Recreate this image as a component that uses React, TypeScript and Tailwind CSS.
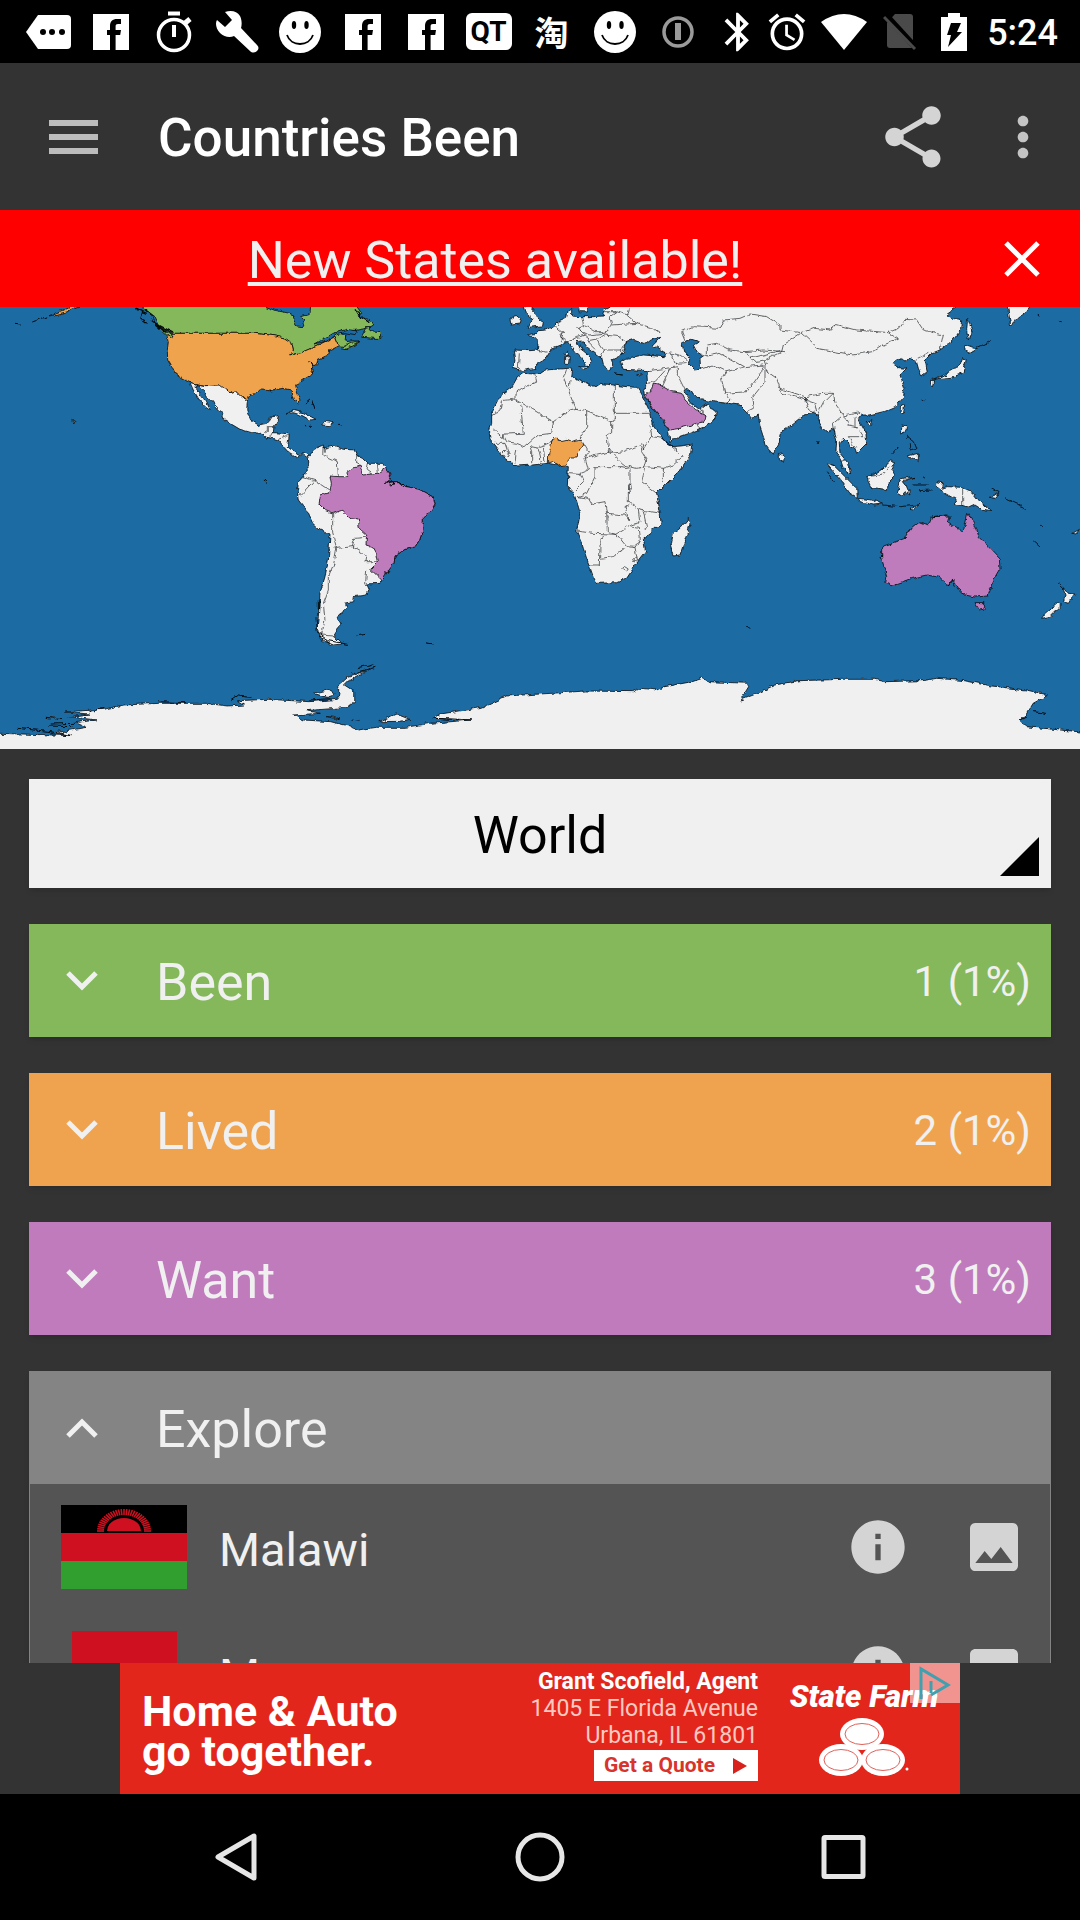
import React from "react";
import { MdInfo, MdImage, MdShare, MdBluetooth, MdAlarm, MdMoreVert } from "react-icons/md";

const Tag = () => (
  <svg className="h-10 w-12" viewBox="0 0 48 40">
    <path d="M14 3h29a4 4 0 0 1 4 4v26a4 4 0 0 1-4 4H14L2 20z" fill="#fff" />
    <circle cx="19" cy="20" r="3" /><circle cx="28" cy="20" r="3" /><circle cx="38" cy="20" r="3" />
  </svg>
);
const Facebook = () => (
  <svg className="h-9 w-9" viewBox="0 0 36 36">
    <path d="M0 0h36v36H0z" fill="#fff" />
    <path d="M17 36V21h-3v-5h3v-4c0-4.500 2.500-7 7-7h4v5h-3c-1.600 0-2.400.8-2.400 2.400V16H28l-.8 5h-4.600v15z" />
  </svg>
);
const Timer = () => (
  <svg className="h-11 w-10" viewBox="0 0 40 44" fill="none" stroke="#fff">
    <circle cx="20" cy="25" r="15.500" strokeWidth="3.500" />
    <path d="M14 3.500h12" strokeWidth="4" /><path d="M20 15v12" strokeWidth="4" /><path d="M30 14l6-5" strokeWidth="5" />
  </svg>
);
const Wrench = () => (
  <svg className="h-11 w-11" viewBox="0 0 44 44">
    <path d="M10 2C16 0 22 1 25 6c2 4 2 9 1 12l16 17c2 2 2 4 0 6s-5 2-7 0L19 26c-4 2-10 1-14-3C1 19 0 13 2 10l8 7 7-7z" fill="#fff" />
  </svg>
);
const Smile = () => (
  <svg className="h-[42px] w-[42px]" viewBox="0 0 42 42">
    <circle cx="21" cy="21" r="21" fill="#fff" />
    <ellipse cx="15" cy="14" rx="2.200" ry="4" /><ellipse cx="27.500" cy="14" rx="2.200" ry="4" />
    <path d="M8 24c4 12 22 12 26 0" fill="none" stroke="#000" strokeWidth="1.800" />
  </svg>
);
const Keyring = () => (
  <svg className="h-8 w-8" viewBox="0 0 32 32" fill="none" stroke="#9a9a9a">
    <circle cx="16" cy="16" r="14" strokeWidth="3.500" /><path d="M16 7v17" strokeWidth="6" />
  </svg>
);
const Wifi = () => (
  <svg className="h-9 w-[46px]" viewBox="0 0 46 36"><path d="M0 8Q23-8 46 8L23 36z" fill="#fff" /></svg>
);
const NoSim = () => (
  <svg className="h-9 w-[34px]" viewBox="0 0 34 36">
    <path d="M12 0h15q3 0 3 3v31q0 0-1 0H7q-3 0-3-3V9z" fill="#4a4a4a" />
    <path d="M2 0l32 35" stroke="#000" strokeWidth="6" /><path d="M1 3l31 32" stroke="#4a4a4a" strokeWidth="3" />
  </svg>
);
const Battery = () => (
  <svg className="h-[38px] w-[26px]" viewBox="0 0 26 38">
    <path d="M7 0h12v4h7v34H0V4h7z" fill="#fff" /><path d="M10 10h10l-4 9h5L7 34l3-12H6z" />
  </svg>
);

function StatusBar() {
  const notes = [
    <Tag />, <Facebook />, <Timer />, <Wrench />, <Smile />, <Facebook />, <Facebook />,
    <span className="flex h-[37px] w-[46px] items-center justify-center rounded-md bg-white text-[28px] font-bold leading-none text-black">QT</span>,
    <span className="font-['Noto_Sans_CJK_SC',sans-serif] text-[34px] font-bold leading-none text-white">淘</span>,
    <Smile />, <Keyring />,
  ];
  return (
    <div className="flex h-[63px] shrink-0 items-center bg-black pl-4 pr-[22px]">
      {notes.map((n, i) => (
        <div key={i} className="flex w-[63px] justify-center">{n}</div>
      ))}
      <div className="ml-auto flex items-center">
        <MdBluetooth className="mr-1 size-[46px] text-white" />
        <MdAlarm className="mr-3 size-[44px] text-white" />
        <Wifi />
        <div className="ml-4 mr-6"><NoSim /></div>
        <Battery />
        <span className="ml-5 pt-0.5 text-[36px] font-medium leading-none text-white">5:24</span>
      </div>
    </div>
  );
}

const LAND = "#f0f0f0";
const SEA = "#1c6ba3";

function WorldMap() {
  const a = "translate(0 300) scale(.33333)";
  const b = "translate(480 300) scale(.33333)";
  const c = "translate(740 300) scale(.33333)";
  return (
    <svg className="block w-full shrink-0" viewBox="0 307 1080 442" role="img" aria-label="World map">
      <defs>
        <filter id="coast" x="0" y="0" width="100%" height="100%" filterUnits="objectBoundingBox">
          <feTurbulence type="fractalNoise" baseFrequency=".16" numOctaves="2" seed="4" />
          <feDisplacementMap in="SourceGraphic" scale="5" xChannelSelector="R" yChannelSelector="G" />
        </filter>
      </defs>
      <rect x="0" y="300" width="1080" height="460" fill={SEA} />
      <g filter="url(#coast)" stroke="#050a0e" strokeWidth="2.400" strokeLinejoin="round">
        <rect x="0" y="290" width="1080" height="480" fill="none" stroke="none" />
        <g transform={a} fill={LAND}>
          <path fill="#84b85a" d="M400 5L445 35 465 50 480 80 518 100 765 100 830 108 852 114 876 130 880 150 872 165 905 157 940 142 975 125 1005 112 1015 137 1035 140 1025 147 1045 145 1080 125 1060 122 1038 125 1040 108 1020 100 1060 92 1100 85 1118 75 1112 62 1075 45 1085 40 1060 5z" />
          <path fill="#84b85a" d="M1085 112L1100 85 1112 82 1110 95 1140 98 1143 115 1125 115zM1028 140L1050 128 1080 122 1050 140 1030 148zM472 82L490 85 518 105 515 114 495 103z" />
          <path fill={SEA} d="M785 15L830 32 870 40 885 45 880 62 890 78 905 80 912 65 905 50 930 42 932 10zM945 132L1000 100 1040 88 1070 92 1065 104 1035 98 1010 104 985 122z" />
          <path fill="none" d="M405 20L425 35 420 55 440 70M430 25L455 45 465 72 500 95M410 28L440 40M450 60L500 100M470 72L520 98M1065 25L1080 50 1105 65" strokeWidth="4" />
          <path fill="#f0a34e" d="M500 103L516 114 520 100 765 100 830 108 852 114 876 130 880 150 872 165 905 157 940 142 975 125 1005 112 1015 137 990 150 985 165 955 178 950 195 935 205 938 222 900 245 887 258 890 275 900 300 895 312 880 298 872 270 850 265 830 268 810 272 785 270 755 282 740 290 743 303 735 305 718 285 705 272 690 278 670 265 660 255 615 257 570 248 545 235 525 222 515 200 503 180 502 150 505 125zM145 48L185 32 215 18 240 18 200 35 165 45zM218 358L225 362 221 370z" />
          <path fill="none" strokeWidth="3" d="M97 66L118 58 140 50M45 70L62 72M795 540L802 548M925 185L942 195 930 212 940 220M810 268L815 277M930 300L915 312M935 300L945 330" />
          <path d="M570 248L615 257 660 255 690 278 705 272 718 285 742 305 740 330 752 360 775 375 800 370 808 352 835 348 832 365 822 380 820 398 850 400 868 402 865 425 863 440 880 455 895 465 910 455 930 462 922 472 905 462 890 473 870 462 855 445 835 420 820 415 800 412 780 400 755 398 720 388 690 370 672 358 668 340 645 315 620 285 600 260 588 252 590 268 605 288 620 308 632 332 615 320 595 295 580 270z" />
          <path d="M858 342L880 332 910 338 948 358 930 360 905 346 880 338zM965 375L975 364 1000 368 990 377zM915 377L932 376zM1015 376L1027 377z" />
          <path d="M930 465L945 445 970 435 975 445 1000 438 1030 448 1065 450 1070 465 1090 475 1105 490 1150 490 1160 510 1170 525 1165 545 1190 545 1220 560 1260 568 1300 590 1305 612 1290 635 1270 655 1268 690 1258 720 1245 740 1215 748 1185 768 1180 790 1160 815 1140 850 1100 852 1108 870 1100 885 1060 890 1058 905 1035 910 1040 922 1020 945 1010 960 1025 970 1012 985 1000 1005 1025 1032 1000 1035 965 1020 950 990 955 950 960 880 975 830 985 780 990 705 960 690 938 670 920 630 895 600 892 575 895 550 905 530 925 515 922 475z" />
          <path fill="#bf7bbc" d="M990 577L994 550 990 528 1015 530 1030 530 1042 525 1040 512 1080 497 1088 525 1115 522 1135 520 1155 505 1170 525 1160 548 1190 545 1220 560 1260 568 1300 590 1305 612 1290 635 1270 655 1268 690 1258 720 1245 740 1215 748 1185 768 1182 790 1145 840 1112 808 1135 785 1130 760 1120 742 1098 735 1100 705 1078 685 1075 660 1050 655 1028 630 1000 640 975 630 957 612 962 585z" />
          <g fill="none" strokeWidth="1.800">
            <path d="M970 437L968 465 1012 485 1015 528M905 530L945 542 990 572M945 542L905 585 895 580M998 640L998 700 1010 745 1057 740 1098 765 1095 785 1135 785M1057 740L1065 715 1098 712M1010 745L1002 790 985 830 985 870 970 910 975 960 965 1005 1000 1008M1100 810L1097 850M1070 465L1070 490 1085 500M1105 490L1100 512 1115 522M1132 490L1135 520M822 380L805 380 805 395 792 402M820 398L812 412M868 405L835 418M865 440L850 440M908 455L912 465" />
          </g>
          <path strokeWidth="3" fill="none" d="M1155 552L1175 542 1185 552 1165 555M1190 545L1220 560M975 440L975 458M948 955L955 1000 985 1022 1045 1033M958 1010L990 1030M955 900L955 930M1070 1007L1100 1003M1278 1028L1298 1032M1075 1103L1125 1090M1155 820L1165 812M1390 0" />
        </g>
        <g transform={b} fill={LAND}>
          <path d="M100 150L150 152 172 150 175 125 160 110 142 105 168 100 175 92 200 90 222 78 238 62 260 52 265 30 275 25 275 48 300 50 340 50 370 48 375 30 390 22 390 -20 1455 -20 1440 15 1398 45 1420 55 1448 60 1445 85 1420 120 1380 150 1355 160 1335 180 1342 215 1325 228 1315 205 1308 180 1285 172 1275 185 1265 175 1240 188 1255 203 1280 205 1260 225 1275 265 1270 290 1245 320 1210 335 1170 345 1145 345 1135 358 1158 400 1160 430 1130 460 1125 445 1105 430 1090 415 1078 430 1080 460 1105 490 1112 522 1090 505 1082 480 1068 455 1070 420 1060 385 1042 397 1028 385 1012 345 995 340 975 345 930 380 900 400 898 430 878 465 860 440 840 380 835 345 818 355 800 335 780 315 745 310 700 305 665 300 650 288 620 268 612 275 630 305 645 318 660 330 685 310 688 325 712 335 708 355 670 385 600 410 570 427 565 390 540 350 520 325 495 290 490 272 500 258 498 225 505 212 470 210 430 208 420 185 440 175 490 165 553 170 550 155 520 135 542 112 510 120 495 132 480 125 460 118 440 125 430 160 415 170 395 180 400 200 385 210 370 195 365 175 345 160 320 140 305 120 290 122 300 145 330 170 335 190 325 200 310 180 285 155 262 125 240 138 210 150 205 158 195 175 175 185 165 205 125 212 100 205 105 180z" />
          <path fill={SEA} d="M605 128L635 118 658 125 640 135 650 155 670 168 660 175 662 208 645 210 625 190 630 175 612 155z" />
          <path d="M132 15L160 15 158 38 190 65 188 78 145 82 150 68 160 60 140 45zM90 58L110 45 122 55 118 72 95 75zM295 15L325 15 322 36 298 35zM295 198L325 198 318 207zM257 170L268 168 266 190 257 190zM258 160L266 155 264 168zM405 222L428 225zM470 225L488 222 480 228z" />
          <path d="M130 220L165 222 200 210 265 205 275 208 272 228 300 240 345 260 360 250 400 255 440 260 470 262 478 275 500 315 512 340 520 375 545 410 570 440 600 438 638 432 635 460 600 510 550 560 530 580 540 635 543 670 510 700 490 715 497 755 470 790 440 835 410 848 350 850 340 830 320 775 305 730 290 695 300 640 285 590 262 555 265 500 230 495 205 490 160 495 110 498 70 470 30 420 28 395 35 370 35 340 60 290 95 265 115 230z" />
          <path d="M625 655L630 675 618 710 600 765 580 768 572 740 580 700 600 685z" />
          <path fill="#f0a34e" d="M205 488L206 462 213 440 215 420 228 414 240 422 258 418 275 425 288 420 305 418 311 430 298 450 288 474 272 474 262 484 255 495 235 498 220 484z" />
          <path fill="#bf7bbc" d="M495 285L515 270 520 252 545 258 575 275 605 280 615 300 635 318 650 332 678 345 675 365 650 370 600 385 567 390 545 355 520 325z" />
          <g fill="none" strokeWidth="1.800">
            <path d="M165 225L170 245 125 265 105 280 105 297 65 302 60 330 35 347M105 297L220 365 270 330 288 325 265 270 250 235 260 208M122 315L130 400 75 402 68 415 40 390M220 365L215 400 175 405 135 440 110 430 80 425 68 400M270 240L268 265M288 325L320 332 395 362 403 360 403 255M403 340L512 340M395 362L395 395 380 405 385 440 395 455 350 465 315 475 325 455 310 430M320 332L320 380 300 415M385 440L390 460 430 455 480 435 488 460 500 480 495 500 470 505 430 495 400 465M510 375L515 410 490 450 485 430M515 410L550 415 575 440 610 468 580 495 550 505 500 500M550 505L550 550M495 500L485 545 530 580M345 500L425 500 450 505 450 555 445 575 445 605 480 630 545 640M345 500L345 530 320 580 292 590 325 595 335 612 375 605 380 640 435 645 445 660 435 620 450 610M315 475L325 510 300 520 265 518M300 520L310 545 285 570M380 640L382 695 410 703 455 675 480 668 475 630M290 693L340 700 410 703M370 705L360 740 358 795 330 795M360 775L400 770 440 740 410 703M440 740L465 742 478 720 475 685 450 680M465 742L472 780M490 635L500 680 495 690M175 440L205 430 215 418M155 495L155 455 150 440 175 445 185 490M110 450L105 485M45 430L75 430 85 460M195 485L190 440" />
            <path d="M65 460L75 450 88 465 75 472zM425 805L434 797 445 804 436 813zM458 778L465 773 470 782 462 786zM445 555L458 552 455 565 447 578z" />
            <path d="M118 160L115 205M172 150L205 158M222 78L250 100 240 125 262 125M240 62L235 80M250 100L240 110 265 125 290 112 320 105 300 90 290 85 310 75 305 50M310 75L345 95 385 95 395 70 390 50M300 90L330 105 370 100 385 95M320 105L325 125 350 120 375 105M350 120L370 150 425 150 440 125M370 150L360 170 365 180M325 125L345 145M425 150L425 168M375 105L420 110 440 125M390 50L410 35 440 45 470 70 395 75M470 70L520 85 542 100M375 35L410 35M440 45L445 25M545 155L600 165 620 180M575 165L585 190 620 188M585 190L595 200 505 212M595 200L595 230 615 270M545 258L570 205M505 250L525 245 555 212M650 370L660 390M660 330L678 345M660 208L700 195 740 215 725 240 735 280 750 300 740 310M740 215L795 200 850 195 845 215 820 250 800 275 735 280M605 95L640 80 720 85 730 60 780 55 810 42 860 50 900 75 900 90 965 98M605 95L615 120M682 168L682 135 710 130 750 150 795 155 810 175 900 152M682 168L660 160M682 168L720 160 790 200M795 155L850 150 920 155M810 175L820 185 855 180 860 195M855 180L905 155 910 135 965 98M855 195L855 245 815 295 820 325 800 335M855 210L890 235 900 265 975 290 980 300 905 280 895 260M975 290L1030 280 1060 280 1065 310 1090 345 1140 335 1145 345M975 290L985 330 1010 335 1005 310 975 300M1060 280L1030 310 1012 345M1090 345L1060 370 1065 400M1090 345L1105 375 1130 380 1150 410 1105 410M1125 350L1125 380M965 98L1000 130 1010 145 1065 155 1120 165 1180 155 1210 135 1255 118 1225 98 1130 90 1065 73 1055 90 1000 85zM1225 98L1255 85 1275 58 1310 60 1330 90 1390 105 1380 150M1310 178L1345 160M1080 485L1095 480M1105 410L1130 445" />
          </g>
        </g>
        <g transform={c} fill={LAND}>
          <path d="M800 10L865 10 868 30 840 50 812 78 808 50zM683 55L695 90 685 120 680 90zM675 135L710 148 690 160 675 150zM668 172L678 185 668 220 635 232 600 235 582 240 620 220 645 205 660 195zM572 240L584 243 580 258 572 250zM485 318L494 315 490 340 483 335zM378 368L396 362 390 375zM485 375L500 378 495 400 485 405zM502 468L535 460 535 485 515 475zM118 460L133 470 130 485 118 480z" />
          <path d="M260 492L285 500 315 530 350 565 352 592 330 580 305 545 275 510zM355 595L395 600 430 612 400 615 360 605zM380 530L400 525 435 500 452 482 465 492 455 510 465 525 445 545 442 572 395 565 385 545zM480 540L520 532 490 545 498 555 510 585 495 575 485 588 472 580 478 555zM590 545L608 548 605 565 625 560 660 562 700 580 720 605 752 632 725 628 705 615 690 622 660 615 640 612 650 600 615 580 590 560zM745 592L775 580 765 595zM510 628L540 612 520 630zM970 860L985 880 1005 882 985 910 970 905 975 890zM955 905L965 915 930 950 905 955 915 940zM998 700L1018 688 1008 702z" />
          <path fill="#bf7bbc" d="M425 740L495 715 510 690 540 665 565 675 575 650 630 648 625 670 670 697 683 640 700 670 715 710 750 745 778 775 780 810 760 845 745 885 705 888 665 880 650 855 638 840 625 858 600 832 560 825 515 835 460 855 437 850 440 830 425 775zM702 908L735 908 728 928 715 930z" />
          <path fill="none" strokeWidth="2.500" d="M705 146L752 124M455 462L475 440M498 408L520 425 528 445 510 450 508 430M430 615L480 620 535 615M540 572L575 570M520 555L560 555M792 592L830 610 860 632M880 720L900 738M955 852L970 868M235 432L237 420M262 515L285 545M755 565L778 578M18 978L34 985M900 675L906 680M893 42L898 46M955 64L962 65M575 650L625 645M625 858L635 840 640 860M500 705L515 688M548 530L556 535M548 300L553 302M425 765L423 780" />
          <path fill="none" strokeWidth="1.800" d="M668 563V618M385 530L430 522 450 500" />
        </g>
        <g transform="translate(0 640) scale(.68875 .33333)" fill={LAND}>
          <path vectorEffect="non-scaling-stroke" strokeWidth=".8" d="M-9 280L0 280 105 287 75 280 125 262 110 248 140 240 100 230 130 222 95 216 150 208 180 195 230 190 300 190 330 198 355 195 345 182 390 178 450 185 490 178 495 165 490 140 505 112 535 90 505 125 500 135 515 155 515 190 500 203 445 212 465 220 425 225 440 240 480 245 505 258 520 270 545 262 590 262 625 250 685 240 630 235 640 222 700 202 735 168 800 160 850 153 920 155 930 145 955 150 965 140 1005 125 1020 115 1030 125 1085 130 1087 140 1075 180 1100 160 1125 135 1160 122 1225 118 1270 118 1285 125 1340 122 1360 115 1400 122 1440 138 1490 150 1522 165 1500 190 1490 225 1480 240 1490 260 1580 278 1580 360 -9 360z" />
          <path vectorEffect="non-scaling-stroke" strokeWidth=".8" d="M550 245L575 222 595 238 580 244zM68 232L90 235 80 237zM455 160L480 148 485 165 475 172zM475 230L495 240 485 232zM510 240L522 244" />
          <path vectorEffect="non-scaling-stroke" fill="none" strokeWidth="1" d="M25 265L75 275 105 287M70 258L105 260M75 252L110 250M335 182L345 168 365 172M230 185L270 188M130 215L150 205M510 102L545 82M1500 215L1520 220M1480 242L1490 232M450 180L480 176M630 235L685 240" />
        </g>
      </g>
    </svg>
  );
}

function Chevron({ up = false }: { up?: boolean }) {
  return (
    <svg className="h-5 w-8 shrink-0" viewBox="0 0 32 20" fill="none" stroke="#f0f0f0" strokeWidth="5">
      <path d={up ? "M2 18L16 4l14 14" : "M2 2l14 14L30 2"} />
    </svg>
  );
}

const groups = [
  { name: "Been", count: "1 (1%)", color: "bg-[#84b85a]" },
  { name: "Lived", count: "2 (1%)", color: "bg-[#f0a34e]" },
  { name: "Want", count: "3 (1%)", color: "bg-[#bf7bbc]" },
];

function MalawiFlag() {
  const rays = Array.from({ length: 31 }, (_, i) => (i * Math.PI) / 30);
  return (
    <svg className="h-[84px] w-[126px]" viewBox="0 0 126 84">
      <path d="M0 0h126v28H0z" />
      <path d="M0 28h126v28H0z" fill="#ce1020" />
      <path d="M0 56h126v28H0z" fill="#319f30" />
      <path d="M46 26a17 13 0 0 1 34 0z" fill="#ce1020" />
      {rays.map((t, i) => (
        <line key={i} x1={63 + 20 * Math.cos(t)} y1={26 - 16 * Math.sin(t)} x2={63 + 27 * Math.cos(t)} y2={26 - 22 * Math.sin(t)} stroke="#ce1020" strokeWidth="1.600" />
      ))}
    </svg>
  );
}
const MonacoFlag = () => (
  <svg className="h-[84px] w-[105px]" viewBox="0 0 105 84">
    <path d="M0 0h105v42H0z" fill="#ce1020" />
    <path d="M0 42h105v42H0z" fill="#fff" />
  </svg>
);

function CountryRow({ name, flag }: { name: string; flag: React.ReactNode }) {
  return (
    <li className="flex h-[126px] items-center pl-[31px] pr-6 text-[#d4d4d4]">
      <span className="flex w-[126px] justify-center">{flag}</span>
      <span className="ml-8 flex-1 pt-1 text-[47px] leading-none text-[#f0f0f0]">{name}</span>
      <button aria-label={`About ${name}`} className="mr-[52px]"><MdInfo className="size-16" /></button>
      <button aria-label={`Pictures of ${name}`}><MdImage className="size-16" /></button>
    </li>
  );
}

function Ad() {
  return (
    <div className="flex h-[131px] shrink-0 justify-center">
      <a href="#quote" className="relative flex h-full w-[840px] bg-[#e3261c] text-white">
        <div className="flex-1 pl-[22px] pt-7 text-[43px] font-bold leading-10">
          Home &amp; Auto<br />go together.
        </div>
        <div className="flex w-60 flex-col items-end pt-[5px] text-[23px] leading-[27px]">
          <span className="whitespace-nowrap font-bold">Grant Scofield, Agent</span>
          <span className="whitespace-nowrap text-[#ffc9c0]">1405 E Florida Avenue</span>
          <span className="text-[#ffc9c0]">Urbana, IL 61801</span>
          <span className="mt-px flex h-[31px] w-[164px] items-center justify-between bg-white px-[10px] text-[21px] font-bold text-[#d8342c]">
            Get a Quote
            <svg className="h-4 w-4" viewBox="0 0 16 16" fill="#d8201c"><path d="M1 0l14 8L1 16z" /></svg>
          </span>
        </div>
        <div className="flex w-[202px] flex-col items-center pl-[10px] pt-4">
          <span className="whitespace-nowrap text-[31px] font-black italic leading-9">State Farm</span>
          <svg className="mt-[3px] h-[59px] w-[90px]" viewBox="0 0 90 59">
            <g fill="#fff"><ellipse cx="43" cy="16" rx="22" ry="16" /><ellipse cx="22" cy="42" rx="22" ry="16" /><ellipse cx="64" cy="42" rx="22" ry="16" /></g>
            <g fill="none" stroke="#e0605a"><ellipse cx="43" cy="16" rx="17" ry="10.500" /><ellipse cx="22" cy="42" rx="17" ry="10.500" /><ellipse cx="64" cy="42" rx="17" ry="10.500" /></g>
            <circle cx="88" cy="51" r="1.500" fill="#fff" />
          </svg>
        </div>
        <span className="absolute right-0 top-0 flex h-10 w-[50px] items-center justify-center bg-white/50">
          <svg className="h-9 w-8" viewBox="0 0 32 36" fill="none" stroke="#3fa0b0" strokeWidth="3"><path d="M2 34V4l27 16-17 10" /><path d="M12 16v12" /></svg>
        </span>
      </a>
    </div>
  );
}

export default function App() {
  return (
    <div className="flex h-screen flex-col overflow-hidden bg-[#333] font-['Roboto',sans-serif]">
      <StatusBar />
      <header className="flex h-[147px] shrink-0 items-center pl-[49px] pr-[25px]">
        <button aria-label="Menu" className="flex w-[49px] flex-col gap-2">
          <span className="h-[6px] bg-[#bcbcbc]" /><span className="h-[6px] bg-[#bcbcbc]" /><span className="h-[6px] bg-[#bcbcbc]" />
        </button>
        <h1 className="ml-[60px] flex-1 pt-1 text-[53px] font-medium leading-none text-white">Countries Been</h1>
        <button aria-label="Share"><MdShare className="size-[74px] text-[#d4d4d4]" /></button>
        <button aria-label="More options" className="ml-[41px]"><MdMoreVert className="size-[64px] text-[#c4c4c4]" /></button>
      </header>
      <div className="flex h-[97px] shrink-0 items-center bg-[#f00]">
        <a href="#states" className="flex-1 pt-1 text-center text-[52px] leading-none text-[#f0f0f0] underline decoration-4 underline-offset-4">New States available!</a>
        <button aria-label="Dismiss" className="w-[90px]">
          <svg className="ml-3.5 h-9 w-9" viewBox="0 0 36 36" stroke="#fff" strokeWidth="5"><path d="M2 2l32 32M34 2L2 34" /></svg>
        </button>
      </div>
      <WorldMap />
      <main className="flex min-h-0 flex-1 flex-col gap-9 overflow-hidden px-[29px] pt-[30px]">
        <div className="relative h-[109px] shrink-0 bg-[#f0f0f0] shadow-md">
          <select aria-label="Region" className="h-full w-full appearance-none bg-transparent pt-1 text-center text-[52px] text-black [text-align-last:center]">
            <option>World</option>
          </select>
          <svg className="pointer-events-none absolute bottom-3 right-3 h-[39px] w-[39px]" viewBox="0 0 39 39"><path d="M39 0v39H0z" /></svg>
        </div>
        {groups.map((g) => (
          <button key={g.name} className={`flex h-[113px] shrink-0 items-center pl-[37px] pr-5 text-left text-[#f0f0f0] shadow-md ${g.color}`}>
            <Chevron />
            <span className="ml-[58px] flex-1 pt-1 text-[52px] leading-none">{g.name}</span>
            <span className="pt-0.5 text-[42px] leading-none">{g.count}</span>
          </button>
        ))}
        <section className="shrink-0 border-x border-[#848484] bg-[#545454] shadow-md">
          <button className="flex h-[113px] w-full items-center bg-[#848484] pl-9 text-left text-[#f0f0f0]">
            <Chevron up />
            <span className="ml-[58px] pt-1 text-[52px] leading-none">Explore</span>
          </button>
          <ul>
            <CountryRow name="Malawi" flag={<MalawiFlag />} />
            <CountryRow name="Monaco" flag={<MonacoFlag />} />
          </ul>
        </section>
      </main>
      <Ad />
      <nav className="grid h-[126px] shrink-0 grid-cols-3 place-items-center bg-black px-[85px]">
        <button aria-label="Back">
          <svg className="h-[50px] w-[50px]" viewBox="0 0 50 50" fill="none" stroke="#e6e6e6" strokeWidth="5" strokeLinejoin="round"><path d="M42 4v42L6 25z" /></svg>
        </button>
        <button aria-label="Home">
          <svg className="h-[50px] w-[50px]" viewBox="0 0 50 50" fill="none" stroke="#e6e6e6" strokeWidth="5"><circle cx="25" cy="25" r="22" /></svg>
        </button>
        <button aria-label="Recent apps">
          <svg className="h-[50px] w-[50px]" viewBox="0 0 50 50" fill="none" stroke="#e6e6e6" strokeWidth="5"><rect x="6" y="5.500" width="39" height="39" rx="1" /></svg>
        </button>
      </nav>
    </div>
  );
}
